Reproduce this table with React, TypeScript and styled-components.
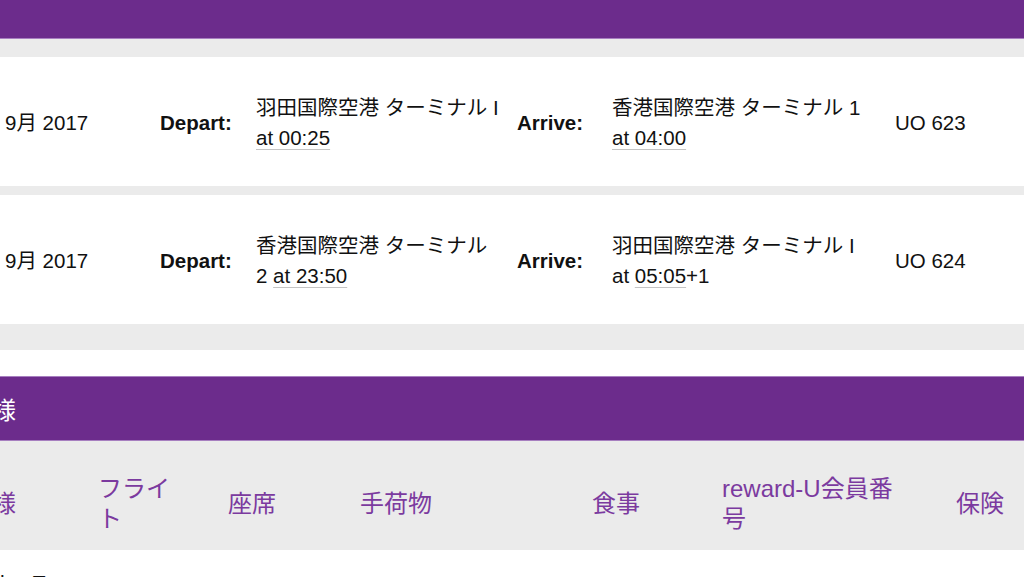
import styled, { createGlobalStyle } from "styled-components";

type Flight = {
    id: number;
    date: string;
    depart: React.ReactNode[];
    arrive: React.ReactNode[];
    flightNo: string;
}

const GlobalStyle = createGlobalStyle`
    html, body {
        margin: 0;
        padding: 0;
        background: #fff;
        overflow: hidden;
    }
    body {
        font-family: "Liberation Sans", "Noto Sans CJK JP", sans-serif;
        color: #111;
    }
`

const Page = styled.div`
    margin-left: -8px;
    width: calc(100% + 8px);
`

const TopBar = styled.div`
    height: 38px;
    background: #6c2c8c;
    border-bottom: 1px solid #a77fc0;
`

const FlightList = styled.div`
    background: #ebebeb;
    padding: 18px 0 26px;
    display: flex;
    flex-direction: column;
    gap: 9px;
`

const FlightRow = styled.div`
    display: grid;
    grid-template-columns: 168px 96px 261px 95px 283px 1fr;
    align-items: center;
    height: 129px;
    padding-top: 3px;
    box-sizing: border-box;
    background: #fff;
    font-size: 20.5px;
    line-height: 30px;
`

const DateCell = styled.div`
    padding-left: 13px;
`

const Label = styled.div`
    font-weight: 700;
`

const Place = styled.div`
    display: flex;
    flex-direction: column;
`

const Line = styled.span`
    white-space: nowrap;
`

const FlightNo = styled.div``

const Time = styled.span`
    text-decoration: underline;
    text-decoration-color: #c4c4c4;
    text-decoration-thickness: 1px;
    text-underline-offset: 4px;
`

const Spacer = styled.div`
    height: 26px;
    background: #fff;
`

const SectionTitle = styled.div`
    height: 63px;
    display: flex;
    align-items: center;
    background: #6c2c8c;
    border-top: 1px solid #a77fc0;
    border-bottom: 1px solid #a77fc0;
    color: #fff;
    font-size: 24px;
    font-family: "Noto Sans CJK JP", sans-serif;
`

const HeaderRow = styled.div`
    display: flex;
    align-items: center;
    height: 109px;
    padding-top: 16px;
    box-sizing: border-box;
    background: #ebebeb;
`

const HeaderCell = styled.div<{ $width: number }>`
    flex: 0 0 ${(p) => p.$width}px;
    box-sizing: border-box;
    padding-right: 50px;
    color: #7b3a9f;
    font-size: 24px;
    line-height: 30px;
    font-family: "Liberation Sans", "Noto Sans CJK JP", sans-serif;
`

const PassengerRow = styled.div`
    display: flex;
    gap: 28px;
    padding: 18px 0 0 8px;
    font-size: 21px;
    line-height: 30px;
`

const flights: Flight[] = [
    {
        id: 1,
        date: "9月 2017",
        depart: [<>羽田国際空港 ターミナル I</>, <Time>at 00:25</Time>],
        arrive: [<>香港国際空港 ターミナル 1</>, <Time>at 04:00</Time>],
        flightNo: "UO 623",
    },
    {
        id: 2,
        date: "9月 2017",
        depart: [<>香港国際空港 ターミナル</>, <>2 <Time>at 23:50</Time></>],
        arrive: [<>羽田国際空港 ターミナル I</>, <>at <Time>05:05</Time>+1</>],
        flightNo: "UO 624",
    },
];

const columns = ["様", "フライト", "座席", "手荷物", "食事", "reward-U会員番号", "保険"];
const colWidths = [106, 130, 132, 232, 130, 234, 120];

const App = () => {
    return (
        <>
            <GlobalStyle />
            <Page>
                <TopBar />
                <FlightList>
                    {flights.map((f) => (
                        <FlightRow key={f.id}>
                            <DateCell>{f.date}</DateCell>
                            <Label>Depart:</Label>
                            <Place>
                                {f.depart.map((l, i) => <Line key={i}>{l}</Line>)}
                            </Place>
                            <Label>Arrive:</Label>
                            <Place>
                                {f.arrive.map((l, i) => <Line key={i}>{l}</Line>)}
                            </Place>
                            <FlightNo>{f.flightNo}</FlightNo>
                        </FlightRow>
                    ))}
                </FlightList>
                <Spacer />
                <SectionTitle>様</SectionTitle>
                <HeaderRow>
                    {columns.map((c, i) => (
                        <HeaderCell key={c} $width={colWidths[i]}>{c}</HeaderCell>
                    ))}
                </HeaderRow>
                <PassengerRow>
                    <span>l</span>
                    <span>T</span>
                </PassengerRow>
            </Page>
        </>
    );
};

export default App;
